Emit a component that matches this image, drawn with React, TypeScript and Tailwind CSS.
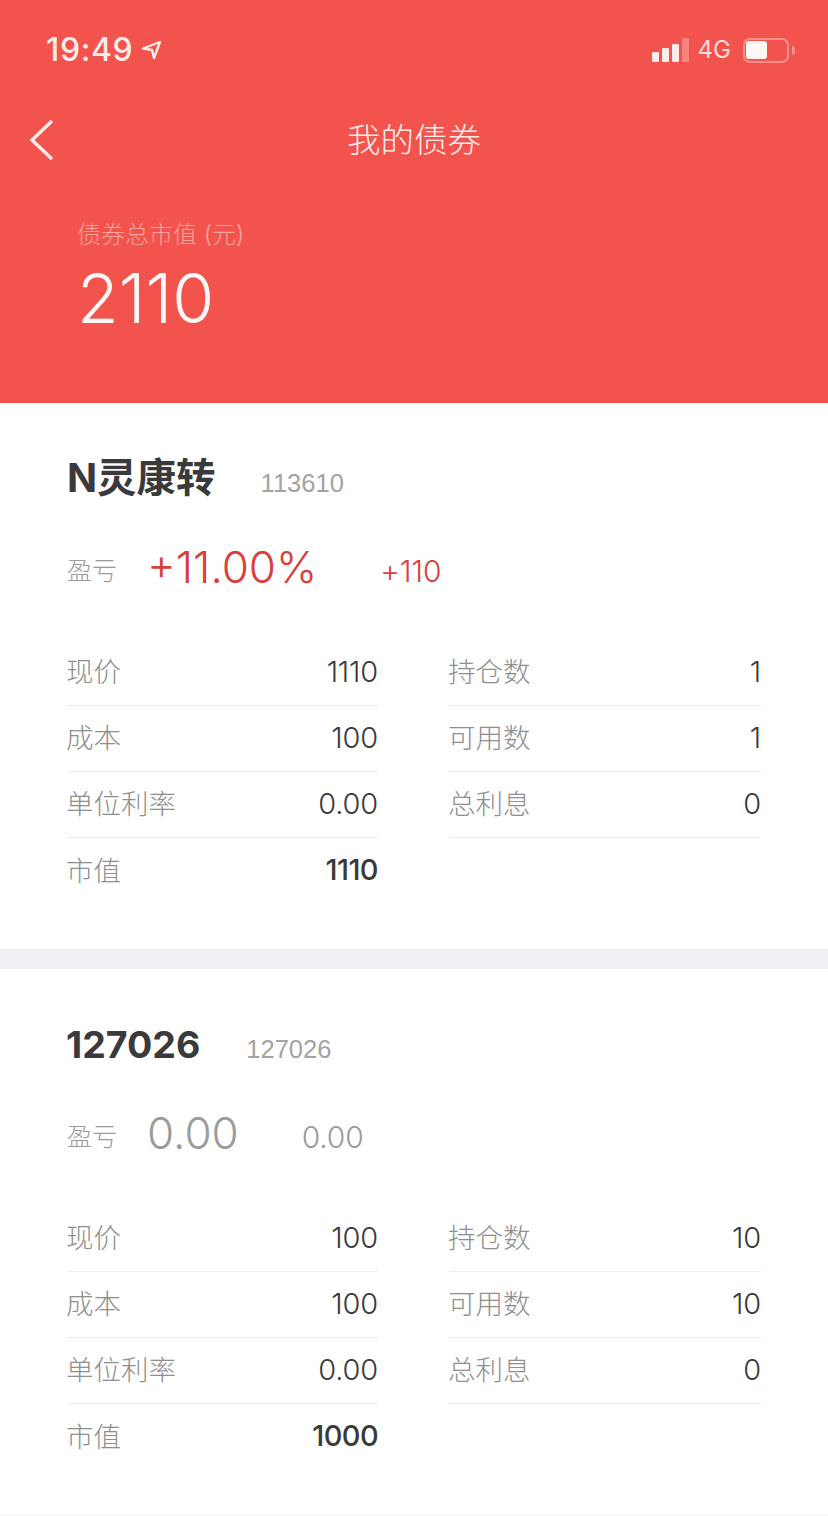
const font = "font-['Inter','Noto_Sans_CJK_SC',sans-serif]"

type Row = { label: string; value: string; bold?: boolean }

const Cell = ({ label, value, bold, last }: Row & { last?: boolean }) => (
  <div className={`flex h-[66px] items-center justify-between ${last ? "" : "border-b border-[#ececec]"}`}>
    <span className="-ml-[1px] pt-[1px] text-[27.5px] font-light text-[#8f8f8f]">{label}</span>
    <span className={`pb-[2px] text-[29px] text-[#3a3a3c] ${bold ? "font-medium tracking-[-0.6px]" : "font-[350] tracking-[-0.2px]"}`}>{value}</span>
  </div>
)

const Bond = ({
  name,
  nameClass,
  code,
  codeGap,
  pct,
  amount,
  accent,
  left,
  right,
}: {
  name: string
  nameClass: string
  code: string
  codeGap: string
  pct: string
  amount: string
  accent: string
  left: Row[]
  right: Row[]
}) => (
  <section className="bg-white px-[67px] pb-[45px] pt-[46px]">
    <div className="flex h-[60px] items-center">
      <h2 className={`${nameClass} font-bold text-[#3a3a3c]`}>{name}</h2>
      <span className={`${codeGap} pt-[8px] font-['Liberation_Sans',sans-serif] text-[25.5px] text-[#a3a3a3]`}>{code}</span>
    </div>
    <div className="mt-[28px] flex h-[60px] items-center">
      <span className="pt-[10px] text-[25px] font-light text-[#9b9b9b]">盈亏</span>
      <span className={`ml-[30px] text-[44px] font-light ${accent}`}>{pct}</span>
      <span className={`ml-[63px] pt-[9px] text-[30px] font-light tracking-[-0.2px] ${accent}`}>{amount}</span>
    </div>
    <div className="mt-[43px] flex gap-[71px]">
      <div className="w-[311px]">
        {left.map((r, i) => (
          <Cell key={r.label} {...r} last={i === left.length - 1} />
        ))}
      </div>
      <div className="w-[312px]">
        {right.map((r) => (
          <Cell key={r.label} {...r} />
        ))}
      </div>
    </div>
  </section>
)

export default function App() {
  return (
    <main className={`h-[1516px] w-[828px] overflow-hidden bg-white ${font}`}>
      {/* header */}
      <header className="h-[403px] bg-[#f3534d] pt-[31px] text-white">
        <div className="flex h-[38px] items-center justify-between pl-[46px] pr-[33px]">
          <div className="flex items-center gap-[8px]">
            <span className="text-[32px] font-medium leading-[38px] tracking-[0.6px] text-[#fdecea]">19:49</span>
            <svg width="21" height="20" viewBox="0 0 21 20" className="text-[#fdecea]">
              <path d="M19 2 2 8.5l9 1.5 2 8z" fill="none" stroke="currentColor" strokeWidth="2.4" strokeLinejoin="round" />
            </svg>
          </div>
          <div className="flex items-center">
            <div className="flex items-end gap-[3px]">
              <span className="h-[10px] w-[7px] rounded-[1px] bg-[#fdecea]" />
              <span className="h-[14px] w-[7px] rounded-[1px] bg-[#fdecea]" />
              <span className="h-[18px] w-[7px] rounded-[1px] bg-[#fdecea]" />
              <span className="h-[24px] w-[7px] rounded-[1px] bg-[#f9837e]" />
            </div>
            <span className="ml-[9px] text-[24px] leading-none text-[#fbdcd9]">4G</span>
            <div className="ml-[12px] flex items-center gap-[3px]">
              <div className="flex h-[25px] w-[46px] items-center rounded-[7px] border-2 border-[#fb8f8a] p-[1px]">
                <span className="h-[18px] w-[21px] rounded-[3px] bg-[#fff6f5]" />
              </div>
              <span className="h-[9px] w-[3px] rounded-r-full bg-[#fb8f8a]" />
            </div>
          </div>
        </div>

        <div className="relative mt-[49px] flex h-[44px] items-center justify-center">
          <svg width="26" height="42" viewBox="0 0 26 42" className="absolute left-[29px] top-[1px] text-[#fdecea]">
            <path d="M23 2 3 21l20 19" fill="none" stroke="currentColor" strokeWidth="3.4" />
          </svg>
          <h1 className="text-[33.5px] font-light text-[#fdecea]">我的债券</h1>
        </div>

        <div className="pl-[77px] pt-[56px]">
          <p className="text-[24px] font-light leading-[34px] text-[#f9a39f]">债券总市值 (元)</p>
          <p className="mt-[6px] text-[68px] font-light leading-[80px] text-[#fff8f7]">2110</p>
        </div>
      </header>

      <Bond
        name="N灵康转"
        nameClass="text-[39.5px]"
        code="113610"
        codeGap="ml-[45px]"
        pct="+11.00%"
        amount="+110"
        accent="text-[#d9403a]"
        left={[
          { label: "现价", value: "1110" },
          { label: "成本", value: "100" },
          { label: "单位利率", value: "0.00" },
          { label: "市值", value: "1110", bold: true },
        ]}
        right={[
          { label: "持仓数", value: "1" },
          { label: "可用数", value: "1" },
          { label: "总利息", value: "0" },
        ]}
      />

      <div className="h-[20px] bg-[#efeff4]" />

      <Bond
        name="127026"
        nameClass="text-[37.5px] -ml-[1px]"
        code="127026"
        codeGap="ml-[46px]"
        pct="0.00"
        amount="0.00"
        accent="text-[#9b9b9b]"
        left={[
          { label: "现价", value: "100" },
          { label: "成本", value: "100" },
          { label: "单位利率", value: "0.00" },
          { label: "市值", value: "1000", bold: true },
        ]}
        right={[
          { label: "持仓数", value: "10" },
          { label: "可用数", value: "10" },
          { label: "总利息", value: "0" },
        ]}
      />
      <div className="h-[2px] bg-[#f3f3f5]" />
    </main>
  )
}
